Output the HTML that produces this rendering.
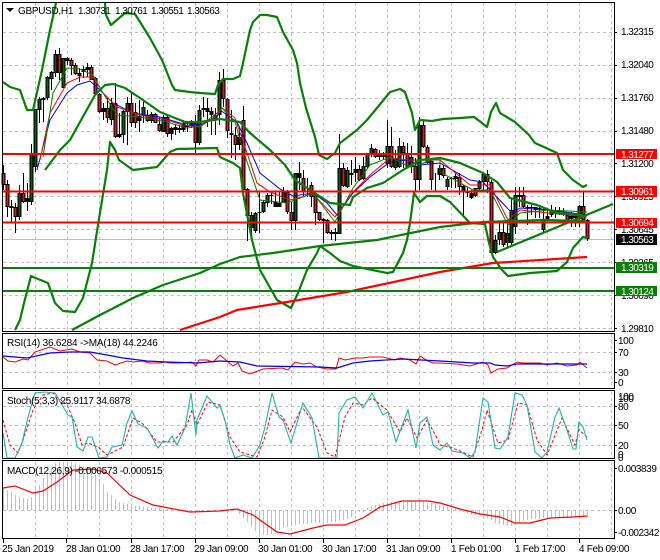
<!DOCTYPE html>
<html><head><meta charset="utf-8"><style>
html,body{margin:0;padding:0;background:#fff}
svg{display:block}
text{font-family:"Liberation Sans",sans-serif;font-size:10px;fill:#000}
.n{fill:none}
</style></head><body>
<svg width="660" height="560" viewBox="0 0 660 560" xmlns="http://www.w3.org/2000/svg">
<rect width="660" height="560" fill="#fff"/>
<g class="n" stroke="#c0c0c0" stroke-dasharray="3 3" fill="none">
<path d="M35.5 3V331M67.5 3V331M99.5 3V331M131.5 3V331M163.5 3V331M195.5 3V331M227.5 3V331M259.5 3V331M291.5 3V331M323.5 3V331M355.5 3V331M387.5 3V331M419.5 3V331M451.5 3V331M483.5 3V331M515.5 3V331M547.5 3V331M579.5 3V331M611.5 3V331"/>
<path d="M3 32.5H614M3 65.5H614M3 98.5H614M3 131.5H614M3 163.5H614M3 196.5H614M3 229.5H614M3 262.5H614M3 295.5H614M3 328.5H614"/>
<path d="M35.5 334V389M67.5 334V389M99.5 334V389M131.5 334V389M163.5 334V389M195.5 334V389M227.5 334V389M259.5 334V389M291.5 334V389M323.5 334V389M355.5 334V389M387.5 334V389M419.5 334V389M451.5 334V389M483.5 334V389M515.5 334V389M547.5 334V389M579.5 334V389M611.5 334V389"/>
<path d="M3 352.5H614M3 372.5H614"/>
<path d="M35.5 392V459M67.5 392V459M99.5 392V459M131.5 392V459M163.5 392V459M195.5 392V459M227.5 392V459M259.5 392V459M291.5 392V459M323.5 392V459M355.5 392V459M387.5 392V459M419.5 392V459M451.5 392V459M483.5 392V459M515.5 392V459M547.5 392V459M579.5 392V459M611.5 392V459"/>
<path d="M3 406.5H614M3 425.5H614M3 445.5H614"/>
<path d="M35.5 462V539M67.5 462V539M99.5 462V539M131.5 462V539M163.5 462V539M195.5 462V539M227.5 462V539M259.5 462V539M291.5 462V539M323.5 462V539M355.5 462V539M387.5 462V539M419.5 462V539M451.5 462V539M483.5 462V539M515.5 462V539M547.5 462V539M579.5 462V539M611.5 462V539"/>
<path d="M3 510.5H614"/>
</g>

<path d="M3 239.5H614" stroke="#bdbdbd" stroke-width="1" fill="none"/>

<g transform="translate(.5 0)" fill="none">
<path id="w" stroke="#000" stroke-width="1" d="M3 165V190M7 180V217M11 200V223M15 203V233M19 185V220M23 173V203M27 183V211M31 144V205M35 109V172M39 97V123M43 97V122M47 76V100M51 71V90M55 50V77M59 48V80M63 58V88M67 57V65M71 58V75M75 63V75M79 68V82M83 66V78M87 63V77M91 65V80M95 77V95M99 93V113M103 103V120M107 98V123M111 98V125M115 83V138M119 113V138M123 110V143M127 97V145M131 93V127M135 103V128M139 100V132M143 100V123M147 110V122M151 112V123M155 113V123M159 117V132M163 115V132M167 115V137M171 127V140M175 124V135M179 125V133M183 120V132M187 123V132M191 120V128M195 115V153M199 105V145M203 97V117M207 98V127M211 107V135M215 108V135M219 72V125M223 69V107M227 98V138M231 110V158M235 127V160M239 128V150M243 106V200M247 188V241M251 212V238M255 212V233M259 192V233M263 200V213M267 193V207M271 191V204M275 192V207M279 192V207M283 187V203M287 190V214M291 202V230M295 173V230M299 162V190M303 170V197M307 178V197M311 182V207M315 193V225M319 212V221M323 218V243M327 219V234M331 230V240M335 228V241M339 134V234M343 163V187M347 167V188M351 160V185M355 157V182M359 165V181M363 157V180M367 153V168M371 144V157M375 148V158M379 150V160M383 152V160M387 120V168M391 127V168M395 150V170M399 138V168M403 142V168M407 143V168M411 146V173M415 158V192M419 117V190M423 120V148M427 145V164M431 160V190M435 173V191M439 165V180M443 165V178M447 177V190M451 177V188M455 173V188M459 173V195M463 185V215M467 187V197M471 190V199M475 188V197M479 180V190M483 173V190M487 170V193M491 180V254M495 235V254M499 222V245M503 222V247M507 220V247M511 198V245M515 187V234M519 187V207M523 187V208M527 205V225M531 205V215M535 207V218M539 205V218M543 207V232M547 210V220M551 205V217M555 207V218M559 207V215M563 208V216M567 212V222M571 212V227M575 213V227M579 205V227M583 192V220M587 219V241"/>
<path id="gb" stroke="#000" stroke-width="4" d="M11 206V208M19 193V217M27 198V202M31 153V202M35 109V167M39 99V110M43 98V100M47 77V98M51 72V79M55 54V73M63 58V88M79 73V76M83 69V72M87 67V70M103 108V112M111 103V120M119 134V137M123 111V135M127 103V112M139 116V121M143 107V116M151 114V121M163 117V132M171 128V134M175 127V130M179 128V130M183 124V130M187 125V127M191 123V126M199 110V143M203 108V110M211 111V115M215 115V120M219 80V115M231 133V135M239 137V145M251 215V228M255 213V231M259 212V213M263 202V212M267 195V203M271 195V196M283 192V203M295 173V221M323 219V221M331 232V234M339 168V234M347 170V187M351 173V175M355 169V173M363 166V179M367 154V167M371 148V154M379 154V157M383 153V157M387 146V164M395 159V168M399 146V167M411 157V167M419 125V180M439 168V175M447 179V187M451 178V179M455 176V179M467 191V193M471 193V198M479 182V189M483 174V182M495 240V253M499 232V240M507 233V243M511 210V243M515 195V227M527 207V208M531 207V208M535 207V210M539 208V209M543 219V230M547 216V219M551 210V215M555 211V213M559 211V213M563 213V215M571 216V219M575 216V218M579 206V219"/>
<path id="rb" stroke="#000" stroke-width="4" d="M3 173V185M7 184V207M15 207V217M23 193V202M59 54V73M67 58V61M71 60V66M75 65V74M91 67V80M95 78V94M99 94V112M107 108V118M115 103V137M131 103V123M135 112V123M147 115V121M155 114V123M159 124V131M167 117V134M195 123V143M207 108V112M223 80V99M227 99V131M235 135V145M243 120V190M247 189V216M275 202V207M279 203V207M287 192V212M291 212V221M299 173V178M303 178V192M311 185V197M315 196V213M319 212V220M327 220V233M335 232V234M343 168V186M359 169V180M375 149V157M391 146V167M403 146V153M407 153V167M415 166V180M423 125V147M427 147V163M431 161V180M443 168V176M459 177V187M463 186V191M475 188V196M487 174V182M491 182V253M503 232V245M519 195V197M523 195V207M567 215V221M583 206V220M587 220V239"/>
<path stroke="#0b5d0b" stroke-width="1.8" d="M19 194V216M31 154V201M35 110V166M39 100V109M47 78V97M51 73V78M55 55V72M63 59V87M111 104V119M123 112V134M127 104V111M143 108V115M163 118V131M199 111V142M219 81V114M251 216V227M255 214V230M263 203V211M267 196V202M283 193V202M295 174V220M339 169V233M347 171V186M363 167V178M367 155V166M371 149V153M387 147V163M395 160V167M399 147V166M411 158V166M419 126V179M447 180V186M479 183V188M483 175V181M495 241V252M499 233V239M507 234V242M511 211V242M515 196V226M543 220V229M551 211V214M579 207V218"/>
<path stroke="#e8141c" stroke-width="1.8" d="M3 174V184M7 185V206M15 208V216M23 194V201M59 55V72M71 61V65M75 66V73M91 68V79M95 79V93M99 95V111M107 109V117M115 104V136M131 104V122M135 113V122M147 116V120M155 115V122M159 125V130M167 118V133M195 124V142M223 81V98M227 100V130M235 136V144M243 121V189M247 190V215M287 193V211M291 213V220M303 179V191M311 186V196M315 197V212M319 213V219M327 221V232M343 169V185M359 170V179M375 150V156M391 147V166M403 147V152M407 154V166M415 167V179M423 126V146M427 148V162M431 162V179M443 169V175M459 178V186M475 189V195M487 175V181M491 183V252M503 233V244M523 196V206M567 216V220M583 207V219M587 221V238"/>
</g>

<g fill="none" stroke-width="1">
<path stroke="#0000ff" d="M37 170L50 120 67 93 77 85 90 81 100 90 113 103 133 113 160 117 180 123 200 125 217 117 220 110 237 122 247 143 260 173 280 189 293 196 313 193 327 203 337 215 353 193 370 177 390 162 407 160 420 165 440 163 470 180 483 182 493 193 512 213 520 208 550 210 587 215"/>
<path stroke="#ff0000" d="M40 160L50 113 67 83 80 77 93 77 103 93 117 107 140 115 167 120 183 125 200 127 217 115 222 108 235 118 247 153 257 183 270 192 290 200 313 194 335 217 353 192 370 175 390 158 410 160 440 160 470 185 490 185 508 220 520 210 587 217"/>
<path stroke="#008000" d="M43 157L53 93 67 68 80 69 93 75 103 93 117 115 140 117 167 122 187 128 200 126 217 113 222 108 235 122 243 150 260 200 287 203 313 193 335 222 353 188 370 165 390 157 410 167 440 158 440 172 473 190 490 190 508 225 520 213 550 210 587 212"/>
</g>

<g fill="none" stroke="#088008" stroke-width="2.2" stroke-linejoin="round">
<path d="M3 82L10 87 20 90 27 110 33 110 42 70 50 30 56 3"/>
<path d="M105 3L106 15 111 25 125 13 135 14 150 38 162 60 172 85 175 90 190 92 200 93 215 94 218 85 223 79 233 79 240 76 243 63 250 30 253 22 260 15 267 15 277 17 283 32 293 50 297 63 300 83 306 108 315 137 319 155 327 159 335 153 340 143 357 130 367 120 377 108 390 92 400 89 405 92 412 113 415 130 420 120 432 121 443 119 460 118 474 117 482 123 487 127 491 112 496 103 500 113 515 122 529 135 535 143 557 153 563 170 573 180 583 187 587 185"/>
<path d="M45 170L60 150 70 140 80 122 95 95 105 85 113 84 125 88 140 98 160 112 185 122 200 122 220 119 240 122 250 133 270 150 285 165 295 180 310 190 330 203 350 205 353 197 367 188 383 183 403 170 420 160 440 158 460 163 483 173 497 182 510 198 537 205 557 213 583 215"/>
<path d="M15 330L20 320 24 303 31 276 38 279 48 283 55 303 63 311 75 312 83 298 92 263 98 225 107 170 110 142 115 150 119 160 133 170 157 167 170 152 177 149 217 148 220 157 233 163 240 168 243 193 252 240 260 270 277 300 291 308 298 293 307 270 317 253 320 246 330 253 340 261 353 266 387 273 393 272 403 253 407 240 410 223 414 193 420 202 427 196 440 196 450 202 470 223 485 224 489 243 493 257 502 270 508 276 530 273 557 271 567 262 573 248 583 237 587 238"/>
<path d="M72 330L100 315 133 298 163 285 200 273 220 264 240 257 273 253 320 246 377 240 440 227 483 222 543 220 585 221"/>
<path d="M497 252L613 204"/>
</g>
<path d="M180 330L220 317 237 310 287 302 347 292 440 272 493 263 587 257" fill="none" stroke="#ff0000" stroke-width="2.2"/>

<path d="M3 154H614M3 191.5H614M3 222.5H614" fill="none" stroke="#ff0000" stroke-width="2"/>
<path d="M3 268H614M3 291H614" fill="none" stroke="#088008" stroke-width="2"/>

<!-- RSI -->
<path fill="none" stroke="#ff0000" d="M3 357L8 361 15 362 23 359 28 360 35 352 50 347 60 351 72 349 80 352 90 353 97 360 107 361 115 365 127 361 133 362 142 361 150 363 160 363 165 362 170 363 180 363 192 362 196 366 199 360 207 360 213 362 220 355 227 361 233 366 238 363 242 371 250 374 263 369 282 368 288 370 295 362 303 364 310 363 317 367 327 369 336 369 339 358 345 360 355 358 363 358 370 357 383 357 395 360 400 358 410 360 416 364 420 356 428 361 433 363 440 363 457 364 470 366 483 362 488 365 491 373 498 369 507 368 517 362 522 363 540 363 547 365 557 363 567 366 577 365 580 362 587 368"/>
<path fill="none" stroke="#0000ff" stroke-width="1.2" d="M3 356L27 358 50 353 70 352 90 352 107 355 123 358 147 361 167 362 197 363 220 361 240 362 257 366 320 367 337 368 353 363 370 361 403 359 440 361 457 362 473 363 490 363 495 365 507 366 517 364 587 364"/>
<!-- Stoch -->
<path fill="none" stroke="#ff0000" stroke-dasharray="3 2" d="M3 420L10 445 18 453 23 440 33 410 43 395 53 393 67 405 75 423 82 445 88 443 98 447 107 455 123 447 133 418 143 424 157 442 173 442 187 425 192 410 197 425 208 402 220 405 230 437 240 452 257 457 265 437 272 410 283 417 290 432 302 407 317 427 327 453 335 457 345 417 353 403 363 405 372 398 387 410 400 432 407 418 417 438 427 420 437 438 440 445 450 447 460 451 473 457 482 430 487 410 498 443 508 440 518 403 527 405 537 440 547 455 562 418 575 445 579 430 587 437"/>
<path fill="none" stroke="#20b2aa" stroke-width="1.1" d="M3 433L7 458 15 458 22 443 28 417 35 393 45 392 55 393 62 405 68 415 72 417 77 447 83 451 88 437 92 437 99 458 107 457 112 447 122 445 127 423 132 411 138 424 147 428 158 448 163 441 168 442 172 436 177 445 185 428 191 393 196 435 197 420 207 396 217 408 220 406 225 420 230 445 235 458 243 455 252 458 260 445 265 427 272 393 279 417 283 420 291 443 303 403 312 418 319 458 337 458 339 413 347 400 355 397 363 408 372 393 383 415 388 412 396 442 408 410 416 448 420 423 427 417 433 445 440 450 447 443 452 451 463 453 470 458 475 452 483 398 488 402 495 448 500 449 508 437 515 393 522 395 527 405 535 452 542 458 547 452 555 417 559 408 567 430 573 449 576 449 579 422 583 427 587 440"/>
<!-- MACD hist -->
<path fill="none" stroke="#c0c0c0" d="M3.5 510V488M7.5 510V490M11.5 510V492M15.5 510V495M19.5 510V497M23.5 510V498M27.5 510V499M31.5 510V497M35.5 510V490M39.5 510V485M43.5 510V478M47.5 510V472M51.5 510V468M55.5 510V463M59.5 510V462M63.5 510V462M67.5 510V461M71.5 510V462M75.5 510V463M79.5 510V465M83.5 510V466M87.5 510V467M91.5 510V470M95.5 510V474M99.5 510V479M103.5 510V484M107.5 510V492M111.5 510V495M115.5 510V499M119.5 510V502M123.5 510V503M127.5 510V504M131.5 510V505M135.5 510V506M139.5 510V506M143.5 510V507M147.5 510V507M151.5 510V508M155.5 510V508M159.5 510V508M163.5 510V509M167.5 510V509M171.5 510V509M175.5 510V510M179.5 510V511M183.5 510V511M187.5 510V512M191.5 510V512M195.5 510V512M199.5 510V511M203.5 510V511M207.5 510V511M211.5 510V510M215.5 510V510M219.5 510V510M223.5 510V510M227.5 510V509M231.5 510V509M235.5 510V511M239.5 510V514M243.5 510V518M247.5 510V522M251.5 510V527M255.5 510V531M259.5 510V534M263.5 510V535M267.5 510V535M271.5 510V534M275.5 510V532M279.5 510V530M283.5 510V528M287.5 510V527M291.5 510V526M295.5 510V525M299.5 510V524M303.5 510V524M307.5 510V524M311.5 510V523M315.5 510V523M319.5 510V523M323.5 510V523M327.5 510V523M331.5 510V522M335.5 510V522M339.5 510V521M343.5 510V520M347.5 510V519M351.5 510V517M355.5 510V514M359.5 510V512M363.5 510V512M367.5 510V508M371.5 510V506M375.5 510V505M379.5 510V504M383.5 510V503M387.5 510V502M391.5 510V502M395.5 510V502M399.5 510V502M403.5 510V502M407.5 510V502M411.5 510V502M415.5 510V502M419.5 510V502M423.5 510V502M427.5 510V503M431.5 510V503M435.5 510V504M439.5 510V505M443.5 510V506M447.5 510V507M451.5 510V508M455.5 510V508M459.5 510V510M463.5 510V512M467.5 510V514M471.5 510V515M475.5 510V515M479.5 510V515M483.5 510V515M487.5 510V518M491.5 510V520M495.5 510V523M499.5 510V524M503.5 510V525M507.5 510V526M511.5 510V526M515.5 510V525M519.5 510V523M523.5 510V521M527.5 510V520M531.5 510V519M535.5 510V519M539.5 510V519M543.5 510V518M547.5 510V518M551.5 510V518M555.5 510V518M559.5 510V518M563.5 510V518M567.5 510V518M571.5 510V518M575.5 510V517M579.5 510V517M583.5 510V517M587.5 510V517"/>
<path fill="none" stroke="#ff0000" stroke-width="1.2" d="M3 488L15 486 33 493 43 491 57 482 73 470 93 469 107 473 130 495 153 505 190 512 220 511 237 509 253 515 277 532 290 534 313 528 327 525 345 525 363 518 380 507 402 501 428 501 440 503 460 509 480 514 500 517 515 523 530 523 550 518 573 517 587 516"/>

<!-- borders -->
<g fill="none" stroke="#000" stroke-width="1">
<rect x="2.5" y="2.5" width="612" height="329"/>
<rect x="2.5" y="333.5" width="612" height="55"/>
<rect x="2.5" y="390.5" width="612" height="68"/>
<rect x="2.5" y="460.5" width="612" height="78"/>
<path d="M3.5 539V543M66.5 539V543M131.5 539V543M195.5 539V543M259.5 539V543M323.5 539V543M387.5 539V543M451.5 539V543M515.5 539V543M579.5 539V543"/>
<path d="M614 32.5h3M614 65.5h3M614 98.5h3M614 131.5h3M614 163.5h3M614 196.5h3M614 229.5h3M614 262.5h3M614 295.5h3M614 328.5h3M614 340.5h3M614 352.5h3M614 372.5h3M614 382.5h3M614 406.5h3M614 425.5h3M614 445.5h3M614 468.5h3M614 510.5h3M614 532.5h3"/>
</g>

<!-- header -->
<path d="M6 8H14L10 12Z" fill="#000"/>
<text x="18" y="14" letter-spacing="-.3">GBPUSD,H1</text>
<text x="78" y="14" letter-spacing="-.55">1.30731</text>
<text x="115" y="14" letter-spacing="-.55">1.30761</text>
<text x="151" y="14" letter-spacing="-.55">1.30551</text>
<text x="187" y="14" letter-spacing="-.55">1.30563</text>
<text x="7" y="346" letter-spacing="-.2">RSI(14) 36.6284  -&gt;MA(18) 44.2246</text>
<text x="7" y="404" letter-spacing="-.3">Stoch(5,3,3) 25.9117 34.6878</text>
<text x="7" y="474" letter-spacing="-.3">MACD(12,26,9) -0.000573 -0.000515</text>

<!-- price axis -->
<g letter-spacing="-.55">
<text x="621" y="35">1.32315</text>
<text x="621" y="68">1.32040</text>
<text x="621" y="101">1.31760</text>
<text x="621" y="134">1.31480</text>
<text x="621" y="167">1.31200</text>
<text x="621" y="200">1.30925</text>
<text x="621" y="233">1.30645</text>
<text x="621" y="266">1.30365</text>
<text x="621" y="299">1.30090</text>
<text x="621" y="332">1.29810</text>
</g>
<rect x="616" y="149" width="41" height="10" fill="#ff0000"/>
<rect x="616" y="186" width="41" height="11" fill="#ff0000"/>
<rect x="616" y="218" width="41" height="10" fill="#ff0000"/>
<rect x="616" y="234" width="41" height="11" fill="#000"/>
<rect x="616" y="262" width="41" height="11" fill="#088008"/>
<rect x="616" y="286" width="41" height="10" fill="#088008"/>
<g letter-spacing="-.55">
<text x="621" y="158" style="fill:#fff">1.31277</text>
<text x="621" y="195" style="fill:#fff">1.30961</text>
<text x="621" y="226" style="fill:#fff">1.30694</text>
<text x="621" y="243" style="fill:#fff">1.30563</text>
<text x="621" y="271" style="fill:#fff">1.30319</text>
<text x="621" y="295" style="fill:#fff">1.30124</text>
</g>
<text x="618" y="344" letter-spacing="-.4">100</text>
<text x="618" y="356" letter-spacing="-.4">70</text>
<text x="618" y="376" letter-spacing="-.4">30</text>
<text x="618" y="386">0</text>
<text x="618" y="400" letter-spacing="-.4">100</text>
<text x="618" y="402" letter-spacing="-.4">100</text>
<text x="618" y="410" letter-spacing="-.4">80</text>
<text x="618" y="429" letter-spacing="-.4">50</text>
<text x="618" y="449" letter-spacing="-.4">20</text>
<text x="618" y="458">0</text>
<text x="618" y="461">0</text>
<text x="618" y="472" letter-spacing="-.4">0.003839</text>
<text x="618" y="514" letter-spacing="-.4">0.00</text>
<text x="618" y="536" letter-spacing="-.45">-0.002342</text>

<!-- time axis -->
<g letter-spacing="-.3">
<text x="2" y="552">25 Jan 2019</text>
<text x="66" y="552">28 Jan 01:00</text>
<text x="130" y="552">28 Jan 17:00</text>
<text x="194" y="552">29 Jan 09:00</text>
<text x="258" y="552">30 Jan 01:00</text>
<text x="322" y="552">30 Jan 17:00</text>
<text x="386" y="552">31 Jan 09:00</text>
<text x="451" y="552">1 Feb 01:00</text>
<text x="515" y="552">1 Feb 17:00</text>
<text x="579" y="552">4 Feb 09:00</text>
</g>
</svg>
</body></html>
